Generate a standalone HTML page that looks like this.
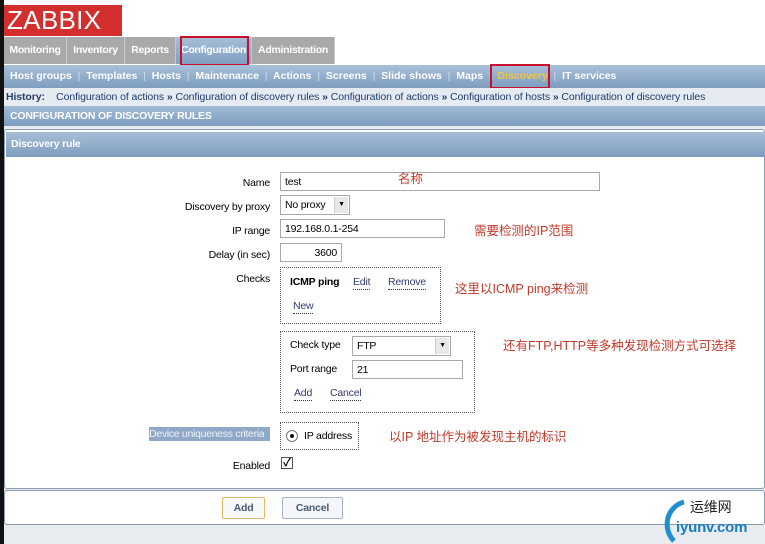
<!DOCTYPE html><html><head><meta charset="utf-8"><style>
*{margin:0;padding:0;box-sizing:border-box}
body{width:765px;height:544px;overflow:hidden;background:#e8ecf0;font-family:"Liberation Sans","Noto Sans CJK SC",sans-serif;font-size:10.5px;letter-spacing:-0.2px;position:relative;color:#000}
.a{position:absolute}
.cn{color:#c0392b;font-size:12.5px;letter-spacing:0;font-family:"Liberation Sans","Noto Sans CJK SC",sans-serif}
.lbl{position:absolute;right:495px;text-align:right}
.inp{position:absolute;border:1px solid #a9a9a9;background:#fff;height:19px;padding:3px 4px}
.lk{position:absolute;color:#333a6e;border-bottom:1px dotted #333;line-height:13px}
.dot{position:absolute;border:1px dotted #555}
.tab{position:absolute;top:37px;height:27px;background:#a9a9a9;color:#fff;font-weight:bold;font-size:10.5px;letter-spacing:-0.3px;line-height:27px;text-align:center;border-right:1px solid #c8c8c8}
.s{color:#cfdbe8;font-weight:normal}
</style></head><body>
<div class="a" style="left:0;top:0;width:765px;height:37px;background:#fff"></div>
<div class="a" style="left:0;top:0;width:4px;height:544px;background:#111;z-index:5"></div>
<div class="a" style="left:4px;top:5px;width:118px;height:31px;background:#d32f2f;color:#fff;font-size:26px;line-height:31px;padding-left:3px;letter-spacing:0.3px">ZABBIX</div>
<div class="a" style="left:4px;top:37px;width:761px;height:28px;background:#fff"></div>
<div class="tab" style="left:4px;width:63px">Monitoring</div>
<div class="tab" style="left:67px;width:58px">Inventory</div>
<div class="tab" style="left:125px;width:51px">Reports</div>
<div class="tab" style="left:176px;width:76px;background:linear-gradient(#a7bfd8,#7f9fc2)">Configuration</div>
<div class="tab" style="left:252px;width:83px">Administration</div>
<div class="a" style="left:180px;top:36px;width:69px;height:30px;border:2px solid #c8102e"></div>
<div class="a" style="left:4px;top:65px;width:761px;height:23px;background:linear-gradient(#a9c0d9,#7d9dc0);color:#fff;font-weight:bold;font-size:10.5px;letter-spacing:0;line-height:23px;padding-left:6px;white-space:nowrap">Host groups <span class="s">&nbsp;|&nbsp;</span> Templates <span class="s">&nbsp;|&nbsp;</span> Hosts <span class="s">&nbsp;|&nbsp;</span> Maintenance <span class="s">&nbsp;|&nbsp;</span> Actions <span class="s">&nbsp;|&nbsp;</span> Screens <span class="s">&nbsp;|&nbsp;</span> Slide shows <span class="s">&nbsp;|&nbsp;</span> Maps <span class="s">&nbsp;|&nbsp;</span> <span style="color:#f3c53a">Discovery</span> <span class="s">&nbsp;|&nbsp;</span> IT services</div>
<div class="a" style="left:490px;top:64px;width:60px;height:25px;border:2px solid #c8102e"></div>
<div class="a" style="left:4px;top:88px;width:761px;height:18px;background:#e6ebf1;line-height:18px;padding-left:2px;color:#1f3c6e;white-space:nowrap;font-size:10.5px;letter-spacing:-0.1px"><b style="color:#2a3f66">History:</b>&nbsp;&nbsp;&nbsp; Configuration of actions <b>»</b> Configuration of discovery rules <b>»</b> Configuration of actions <b>»</b> Configuration of hosts <b>»</b> Configuration of discovery rules</div>
<div class="a" style="left:4px;top:106px;width:761px;height:20px;background:linear-gradient(#a3bbd5,#7d9dc0);color:#fff;font-weight:bold;line-height:20px;padding-left:6px">CONFIGURATION OF DISCOVERY RULES</div>
<div class="a" style="left:4px;top:129px;width:761px;height:360px;background:#fff;border:1px solid #8b9bb0;border-radius:3px"></div>
<div class="a" style="left:6px;top:132px;width:759px;height:25px;background:linear-gradient(#a7bed7,#7e9dbf);color:#fff;font-weight:bold;line-height:25px;padding-left:5px">Discovery rule</div>
<div class="lbl" style="top:177px">Name</div>
<div class="inp" style="left:280px;top:172px;width:320px">test</div>
<div class="a cn" style="left:398px;top:168px">名称</div>
<div class="lbl" style="top:201px">Discovery by proxy</div>
<div class="inp" style="left:280px;top:195px;width:70px;height:20px">No proxy <span style="position:absolute;right:1px;top:1px;width:14px;height:16px;background:#e8e8e8;border-left:1px solid #ccc;font-size:7px;text-align:center;line-height:16px">▼</span></div>
<div class="lbl" style="top:225px">IP range</div>
<div class="inp" style="left:280px;top:219px;width:165px">192.168.0.1-254</div>
<div class="a cn" style="left:474px;top:220px">需要检测的IP范围</div>
<div class="lbl" style="top:249px">Delay (in sec)</div>
<div class="inp" style="left:280px;top:243px;width:62px;text-align:right">3600</div>
<div class="lbl" style="top:273px">Checks</div>
<div class="dot" style="left:280px;top:267px;width:161px;height:57px"></div>
<div class="a" style="left:290px;top:276px;font-weight:bold">ICMP ping</div>
<div class="lk" style="left:353px;top:276px">Edit</div>
<div class="lk" style="left:388px;top:276px">Remove</div>
<div class="lk" style="left:293px;top:300px">New</div>
<div class="a cn" style="left:455px;top:278px">这里以ICMP ping来检测</div>
<div class="dot" style="left:280px;top:331px;width:195px;height:82px"></div>
<div class="a" style="left:290px;top:339px">Check type</div>
<div class="inp" style="left:352px;top:336px;width:99px;height:20px;padding-top:3px">FTP<span style="position:absolute;right:1px;top:1px;width:14px;height:16px;background:#e8e8e8;border-left:1px solid #ccc;font-size:7px;text-align:center;line-height:16px">▼</span></div>
<div class="a" style="left:290px;top:363px">Port range</div>
<div class="inp" style="left:352px;top:360px;width:111px">21</div>
<div class="lk" style="left:294px;top:387px">Add</div>
<div class="lk" style="left:330px;top:387px">Cancel</div>
<div class="a cn" style="left:503px;top:335px">还有FTP,HTTP等多种发现检测方式可选择</div>
<div class="a" style="left:149px;top:427px;width:121px;background:#8fa8c8;color:#eef3f8;line-height:14px;font-size:10.5px;letter-spacing:-0.3px;white-space:nowrap;overflow:hidden">Device uniqueness criteria</div>
<div class="dot" style="left:280px;top:422px;width:79px;height:28px"></div>
<div class="a" style="left:286px;top:430px;width:12px;height:12px;border:1px solid #777;border-radius:50%;background:#fff"><div style="position:absolute;left:3px;top:3px;width:4px;height:4px;border-radius:50%;background:#111"></div></div>
<div class="a" style="left:304px;top:430px">IP address</div>
<div class="a cn" style="left:389px;top:426px">以IP 地址作为被发现主机的标识</div>
<div class="lbl" style="top:460px">Enabled</div>
<div class="a" style="left:281px;top:457px;width:12px;height:12px;border:1px solid #555;background:#fff;font-size:11px;line-height:10px;text-align:center;font-weight:bold">✓</div>
<div class="a" style="left:4px;top:490px;width:761px;height:35px;background:#fff;border:1px solid #8b9bb0;border-radius:3px"></div>
<div class="a" style="left:222px;top:497px;width:43px;height:22px;border:1px solid #e8b86a;border-radius:2px;background:#f8f9fb;color:#4a5a72;font-weight:bold;text-align:center;line-height:20px">Add</div>
<div class="a" style="left:282px;top:497px;width:61px;height:22px;border:1px solid #a9b4c2;border-radius:2px;background:#f4f6f9;color:#4a5a72;font-weight:bold;text-align:center;line-height:20px">Cancel</div>
<div class="a" style="left:660px;top:497px;width:105px;height:47px">
<svg width="30" height="44" style="position:absolute;left:0;top:2px"><path d="M24 3 C6 8 2 30 14 42" stroke="#1f8fd0" stroke-width="5" fill="none"/></svg>
<div style="position:absolute;left:30px;top:0;font-size:14px;color:#222;font-family:'Noto Sans CJK SC',sans-serif">运维网</div>
<div style="position:absolute;left:16px;top:22px;font-size:15px;font-weight:bold;color:#1a7fc0">iyunv.com</div>
</div>
</body></html>
